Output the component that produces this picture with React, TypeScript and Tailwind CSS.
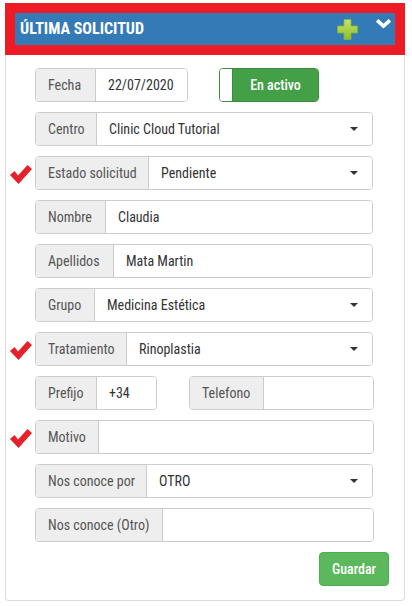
import React from "react";

const font = { fontFamily: '"Roboto Condensed", "Liberation Sans Narrow", Roboto, sans-serif' };

function Check() {
  return (
    <svg width="22" height="22" viewBox="0 0 22 22">
      <path d="M0 13 L4.5 9 L8 13.5 L17.5 3 L22 7 L8.5 22 Z" fill="#e8202a" />
    </svg>
  );
}

function Caret() {
  return <span className="ml-auto mr-[14px] w-0 h-0 border-l-[4px] border-r-[4px] border-t-[4px] border-l-transparent border-r-transparent border-t-[#333]" />;
}

function Group({
  label,
  labelW,
  value,
  select,
  width = "w-[339px]",
}: {
  label: string;
  labelW: string;
  value?: string;
  select?: boolean;
  width?: string;
}) {
  return (
    <div className={`flex h-[34px] ${width} rounded border border-[#ccc] overflow-hidden text-[14px]`}>
      <div className={`${labelW} shrink-0 flex items-center pl-3 bg-[#eee] border-r border-[#ccc] text-[#555]`}>{label}</div>
      <div className="flex-1 flex items-center pl-3 bg-white text-[#333]">
        {value}
        {select && <Caret />}
      </div>
    </div>
  );
}

function Row({ check, children }: { check?: boolean; children: React.ReactNode }) {
  return (
    <div className="flex items-center">
      <div className="w-[29px] shrink-0 flex justify-start pl-[4px]">{check && <Check />}</div>
      {children}
    </div>
  );
}

export default function App() {
  return (
    <div className="w-[412px] h-[606px] bg-white pt-[3px] pl-[5px]" style={font}>
      <div className="w-[400px]">
        <div className="border-[10px] border-[#ed1c24] bg-[#337ab7] h-[52px] flex items-center pl-[5px] pr-[4px]">
          <span className="text-white font-bold text-[16px]">ÚLTIMA SOLICITUD</span>
          <svg className="ml-auto" width="21" height="21" viewBox="0 0 21 21">
            <defs>
              <linearGradient id="g" x1="0" y1="0" x2="0" y2="1">
                <stop offset="0" stopColor="#c6e46a" />
                <stop offset="1" stopColor="#8cbf2a" />
              </linearGradient>
            </defs>
            <path d="M7 0.5 H14 V7 H20.5 V14 H14 V20.5 H7 V14 H0.5 V7 H7 Z" fill="url(#g)" stroke="#86b03a" strokeWidth="0.8" />
          </svg>
          <svg className="ml-[18px] mb-[10px]" width="15" height="10" viewBox="0 0 15 10">
            <path d="M2.5 2.5 L7.5 7 L12.5 2.5" fill="none" stroke="#fff" strokeWidth="3.6" strokeLinecap="square" />
          </svg>
        </div>
        <div className="border border-t-0 border-[#ddd] rounded-b h-[546px] pt-[13px] flex flex-col gap-[10px]">
          <Row>
            <Group label="Fecha" labelW="w-[60px]" value="22/07/2020" width="w-[153px]" />
            <div className="ml-[31px] flex h-[34px] w-[100px] rounded border border-[#3d8b40] overflow-hidden">
              <div className="w-[13px] bg-white border-r border-[#3d8b40]" />
              <div className="flex-1 bg-[#43a047] text-white text-[14px] font-medium flex items-center justify-center">En activo</div>
            </div>
          </Row>
          <Row>
            <Group label="Centro" labelW="w-[61px]" value="Clinic Cloud Tutorial" select width="w-[338px]" />
          </Row>
          <Row check>
            <Group label="Estado solicitud" labelW="w-[113px]" value="Pendiente" select width="w-[338px]" />
          </Row>
          <Row>
            <Group label="Nombre" labelW="w-[70px]" value="Claudia" width="w-[338px]" />
          </Row>
          <Row>
            <Group label="Apellidos" labelW="w-[78px]" value="Mata Martin" width="w-[338px]" />
          </Row>
          <Row>
            <Group label="Grupo" labelW="w-[59px]" value="Medicina Estética" select width="w-[338px]" />
          </Row>
          <Row check>
            <Group label="Tratamiento" labelW="w-[91px]" value="Rinoplastia" select width="w-[338px]" />
          </Row>
          <Row>
            <Group label="Prefijo" labelW="w-[61px]" value="+34" width="w-[122px]" />
            <div className="ml-[32px]">
              <Group label="Telefono" labelW="w-[74px]" width="w-[185px]" />
            </div>
          </Row>
          <Row check>
            <Group label="Motivo" labelW="w-[63px]" width="w-[339px]" />
          </Row>
          <Row>
            <Group label="Nos conoce por" labelW="w-[111px]" value="OTRO" select width="w-[338px]" />
          </Row>
          <Row>
            <Group label="Nos conoce (Otro)" labelW="w-[127px]" width="w-[339px]" />
          </Row>
          <div className="flex justify-end pr-[15px]">
            <button className="w-[70px] h-[34px] rounded bg-[#5cb85c] border border-[#4cae4c] text-white text-[14px] font-medium">Guardar</button>
          </div>
        </div>
      </div>
    </div>
  );
}
